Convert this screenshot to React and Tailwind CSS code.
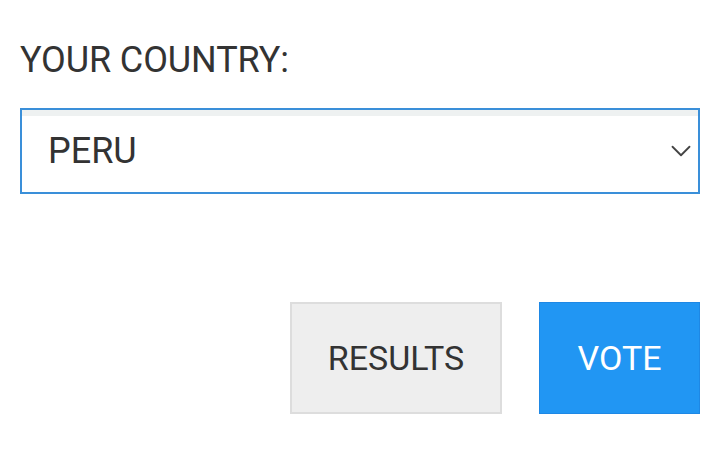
import React from 'react';
import { ChevronDown } from 'lucide-react';

const App = () => {
  return (
    <div className="w-[720px] h-[465px] bg-white px-5 pt-[38px] font-['Roboto',sans-serif] text-[#333]">
      <label className="block text-[36px] leading-[44px] tracking-[-0.1px]">YOUR COUNTRY:</label>

      <div className="mt-[26px] h-[86px] border-2 border-[#3a8fd9] flex flex-col">
        <div className="h-[6px] bg-[#eef1f1]" />
        <div className="flex-1 flex items-center justify-between pl-[26px] pr-0 pb-[6px]">
          <span className="text-[36px] leading-none">PERU</span>
          <ChevronDown className="w-[34px] h-[34px] text-[#444]" strokeWidth={1.3} />
        </div>
      </div>

      <div className="mt-[108px] flex justify-end gap-[37px]">
        <button className="w-[212px] h-[112px] bg-[#eeeeee] border-2 border-[#dddddd] text-[34px] text-[#333]">
          RESULTS
        </button>
        <button className="w-[161px] h-[112px] bg-[#2196f3] border border-[#1e88e5] text-[34px] text-white">
          VOTE
        </button>
      </div>
    </div>
  );
};

export default App;
